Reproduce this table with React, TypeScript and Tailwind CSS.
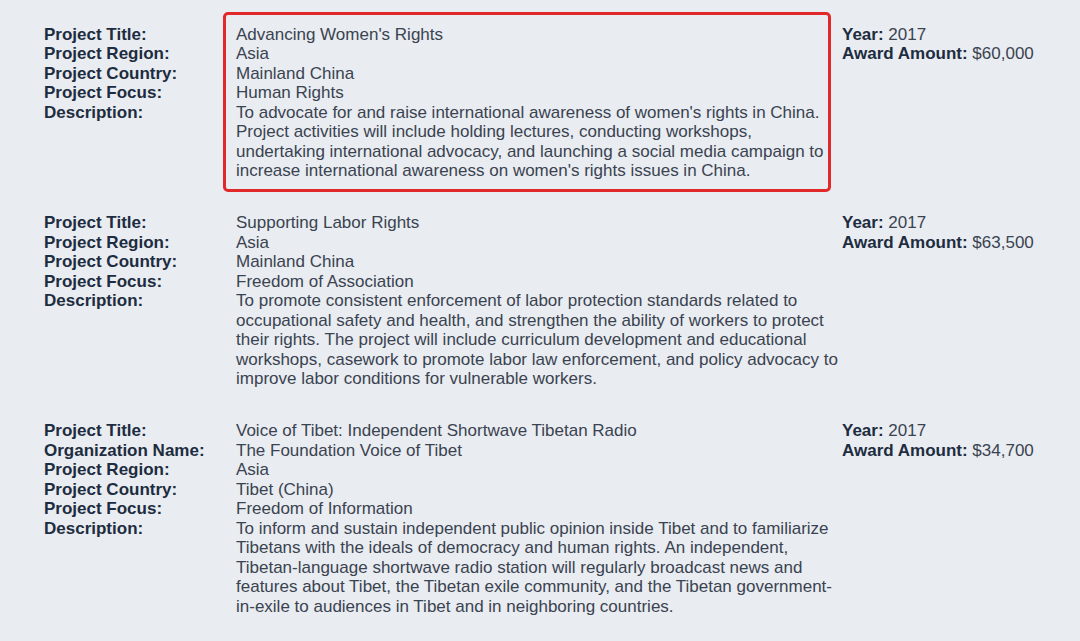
const projects = [
  {
    rows: [
      ["Project Title:", "Advancing Women's Rights"],
      ["Project Region:", "Asia"],
      ["Project Country:", "Mainland China"],
      ["Project Focus:", "Human Rights"],
    ],
    description:
      "To advocate for and raise international awareness of women's rights in China. Project activities will include holding lectures, conducting workshops, undertaking international advocacy, and launching a social media campaign to increase international awareness on women's rights issues in China.",
    year: "2017",
    amount: "$60,000",
    highlight: true,
  },
  {
    rows: [
      ["Project Title:", "Supporting Labor Rights"],
      ["Project Region:", "Asia"],
      ["Project Country:", "Mainland China"],
      ["Project Focus:", "Freedom of Association"],
    ],
    description:
      "To promote consistent enforcement of labor protection standards related to occupational safety and health, and strengthen the ability of workers to protect their rights. The project will include curriculum development and educational workshops, casework to promote labor law enforcement, and policy advocacy to improve labor conditions for vulnerable workers.",
    year: "2017",
    amount: "$63,500",
  },
  {
    rows: [
      ["Project Title:", "Voice of Tibet: Independent Shortwave Tibetan Radio"],
      ["Organization Name:", "The Foundation Voice of Tibet"],
      ["Project Region:", "Asia"],
      ["Project Country:", "Tibet (China)"],
      ["Project Focus:", "Freedom of Information"],
    ],
    description:
      "To inform and sustain independent public opinion inside Tibet and to familiarize Tibetans with the ideals of democracy and human rights. An independent, Tibetan-language shortwave radio station will regularly broadcast news and features about Tibet, the Tibetan exile community, and the Tibetan government-in-exile to audiences in Tibet and in neighboring countries.",
    year: "2017",
    amount: "$34,700",
  },
];

type Project = (typeof projects)[number] & { highlight?: boolean };

function ProjectBlock({ p }: { p: Project }) {
  return (
    <div className="flex">
      <div className="w-[192px] shrink-0 font-bold text-[#1d2c40]">
        {p.rows.map((r) => (
          <div key={r[0]}>{r[0]}</div>
        ))}
        <div>Description:</div>
      </div>
      <div className="relative w-[606px] shrink-0 text-[#3a4351]">
        {p.rows.map((r) => (
          <div key={r[0]}>{r[1]}</div>
        ))}
        <div className={p.highlight ? "pr-[14px]" : ""}>{p.description}</div>
        {p.highlight && (
          <div className="pointer-events-none absolute -left-[13px] -top-[13px] -bottom-[11px] right-[11px] rounded-[5px] border-[3px] border-[#e1292b]" />
        )}
      </div>
      <div className="text-[#3a4351]">
        <div>
          <span className="font-bold text-[#1d2c40]">Year:</span> {p.year}
        </div>
        <div>
          <span className="font-bold text-[#1d2c40]">Award Amount:</span> {p.amount}
        </div>
      </div>
    </div>
  );
}

export default function App() {
  return (
    <div
      className="h-[641px] w-[1080px] overflow-hidden bg-[#e9ecf0] pl-[44px] pt-[24.5px] text-[17px] leading-[19.5px]"
      style={{ fontFamily: '"Liberation Sans", Arial, sans-serif' }}
    >
      <div className="flex flex-col gap-[32.5px]">
        {projects.map((p, i) => (
          <ProjectBlock key={i} p={p} />
        ))}
      </div>
    </div>
  );
}
